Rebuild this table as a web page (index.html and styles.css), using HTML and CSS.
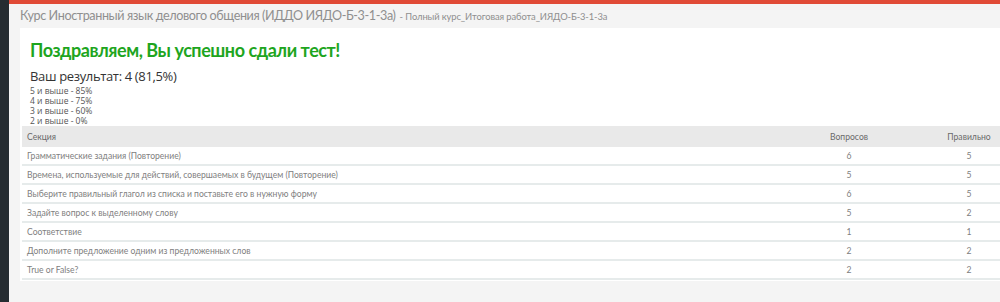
FILE: index.html
```html
<!DOCTYPE html>
<html lang="ru">
<head>
<meta charset="utf-8">
<link rel="stylesheet" href="styles.css">
</head>
<body>
<div class="sidebar"></div>
<div class="main">
  <div class="topbar"></div>
  <div class="titlebar">
    <span class="course">Курс Иностранный язык делового общения (ИДДО ИЯДО-Б-3-1-3а)</span>
    <span class="sub">- Полный курс_Итоговая работа_ИЯДО-Б-3-1-3а</span>
  </div>
  <div class="card">
    <div class="intro">
      <h1 class="congrats">Поздравляем, Вы успешно сдали тест!</h1>
      <div class="result">Ваш результат: 4 (81,5%)</div>
      <div class="scale">
        <div>5 и выше - 85%</div>
        <div>4 и выше - 75%</div>
        <div>3 и выше - 60%</div>
        <div>2 и выше - 0%</div>
      </div>
    </div>
    <table class="results">
      <thead>
        <tr><th class="sec">Секция</th><th class="num c2">Вопросов</th><th class="num c3">Правильно</th></tr>
      </thead>
      <tbody>
        <tr><td>Грамматические задания (Повторение)</td><td class="num">6</td><td class="num">5</td></tr>
        <tr><td>Времена, используемые для действий, совершаемых в будущем (Повторение)</td><td class="num">5</td><td class="num">5</td></tr>
        <tr><td>Выберите правильный глагол из списка и поставьте его в нужную форму</td><td class="num">6</td><td class="num">5</td></tr>
        <tr><td>Задайте вопрос к выделенному слову</td><td class="num">5</td><td class="num">2</td></tr>
        <tr><td>Соответствие</td><td class="num">1</td><td class="num">1</td></tr>
        <tr><td>Дополните предложение одним из предложенных слов</td><td class="num">2</td><td class="num">2</td></tr>
        <tr><td>True or False?</td><td class="num">2</td><td class="num">2</td></tr>
      </tbody>
    </table>
  </div>
</div>
</body>
</html>
```
FILE: styles.css
```css
html, body {
  margin: 0;
  height: 100%;
  overflow: hidden;
}
body {
  display: flex;
  font-family: "Lato", "Open Sans", sans-serif;
  background: #f4f4f4;
}
.sidebar {
  width: 9px;
  flex: none;
  background: #252c31;
}
.main {
  flex: 1;
  min-width: 0;
  background: #f4f4f4;
}
.topbar {
  height: 4px;
  background: #e04a36;
}
.titlebar {
  height: 24px;
  padding-left: 11px;
  line-height: 19px;
  white-space: nowrap;
  color: #8f8f8f;
}
.course {
  font-size: 12.6px;
  letter-spacing: -0.4px;
}
.sub {
  font-size: 9.4px;
  letter-spacing: -0.1px;
}
.card {
  margin-left: 11px;
  width: 1020px;
  background: #fff;
  padding-top: 8px;
  padding-bottom: 1px;
}
.intro {
  padding-left: 10px;
}
.congrats {
  margin: 0;
  font-size: 18px;
  font-weight: 700;
  letter-spacing: -0.45px;
  color: #1ea51e;
  line-height: 28px;
}
.result {
  font-family: "Open Sans", sans-serif;
  font-size: 13px;
  color: #333;
  line-height: 20px;
  margin-top: 2px;
  letter-spacing: -0.35px;
}
.scale {
  font-family: "Open Sans", sans-serif;
  font-size: 8.5px;
  line-height: 10px;
  color: #555;
}
.results {
  margin-left: 2px;
  width: 1005px;
  border-collapse: collapse;
  font-size: 8.6px;
  color: #808080;
}
.results th {
  background: #e9e9e9;
  font-weight: normal;
  color: #6a6a6a;
  height: 21px;
  padding: 0 5px;
  text-align: left;
}
.results td {
  height: 17px;
  padding: 0 5px;
  border-bottom: 2px solid #e6ebeb;
}
.results .num {
  text-align: center;
}
.results .c2 {
  width: 114px;
}
.results .c3 {
  width: 106px;
}
```
